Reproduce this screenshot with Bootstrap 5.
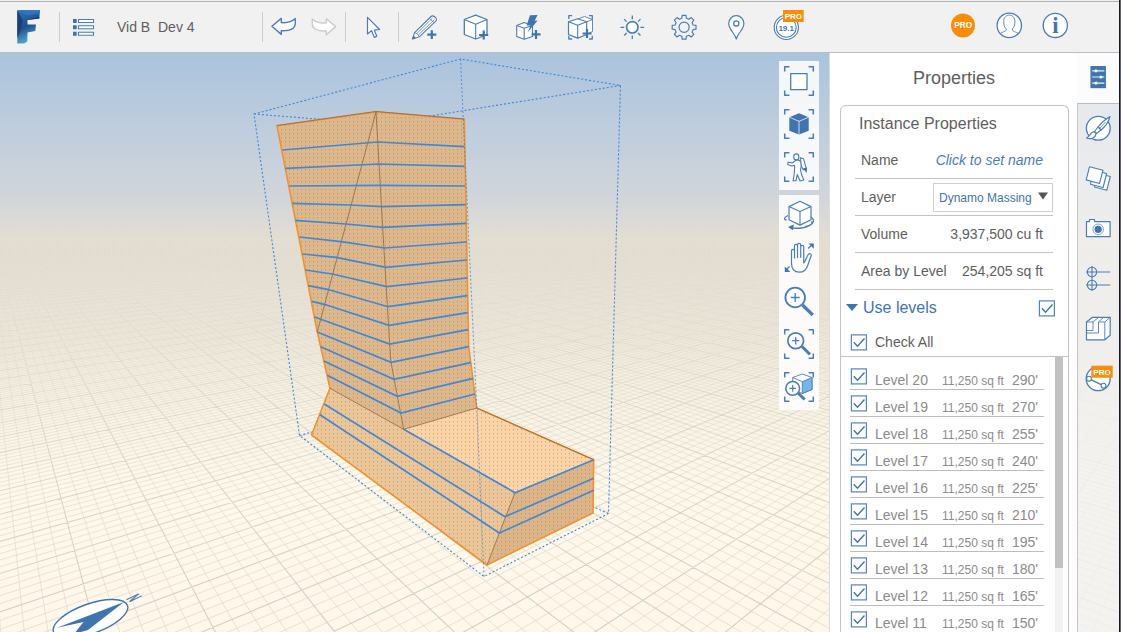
<!DOCTYPE html>
<html lang="en">
<head>
<meta charset="utf-8">
<title>Vid B Dev 4</title>
<link href="https://cdn.jsdelivr.net/npm/bootstrap@5.3.0/dist/css/bootstrap.min.css" rel="stylesheet">
<style>
:root{--ink:#3f74ae;--line:#c3c3c3;--orange:#f78c0d}
body{width:1121px;height:632px;overflow:hidden;font-family:"Liberation Sans",Arial,sans-serif;font-size:14px;line-height:1.2;color:#5e5e5e;background:#fff}
svg{display:block}
.app-shell{width:1119px;height:632px}
.screen-edge{width:2px;height:632px;background:linear-gradient(90deg,#151923 50%,#5a6478 50%)}
.top-bar{height:53px;padding-top:2px;background:#f1f1f1;border-bottom:1px solid #b9bcc0}
.top-bar::before{content:"";position:absolute;left:0;right:0;top:1px;height:1px;background:#b3b3b3}
.divider{width:1px;height:30px;background:#cbcbcb}
.ico{fill:none;stroke:#4a7db5;stroke-width:1.1;stroke-linejoin:round}
.ico .w{fill:#fff}
.ico .s{fill:var(--ink);stroke:none}
.ico text{stroke:none;font-weight:700}
.doc-title{width:154px;padding-left:9px;white-space:pre}
.stage{display:grid;height:579px}
.stage>*{grid-area:1/1;min-width:0}
.tool-set{background:rgba(255,255,255,.85);width:40px}
.view-tools{padding:8px 10px 0 0}
.side-panel{width:249px;background:#fff;border-left:1px solid #dcdcd8;border-right:1px solid #c6c6c6}
.tab-rail{width:41px;background:rgba(241,241,241,.8)}
.tab-on{background:#fcfcfd;border-bottom:1px solid #b9bcc0;margin-left:-1px;width:42px}
.panel-title{height:52px;font-size:18px;padding-left:1px}
.prop-card{margin:0 8px 0 10px;border:1.5px solid var(--line);border-bottom:0;border-radius:6px 6px 0 0;height:527px}
.card-head{height:36px;font-size:16px;padding-left:18px}
.prop-row{height:37px;margin:0 15px 0 14px;padding:0 10px 0 6px;border-bottom:1.5px solid var(--line)}
.layer-select{width:120px;height:29px;border:1.5px solid #cfcfcf;font-size:12px;color:var(--ink);margin-right:-10px;padding:2px 4px 0 5px}
.link-name{color:#4a7db5;font-style:italic}
.use-row{height:36px;font-size:16px;color:var(--ink);padding:0 13px 0 5px}
.all-row{height:31px;padding:2px 0 0 9px;border-bottom:1.5px solid var(--line)}
.tick{width:17px;height:17px;flex:none}
.level-list{padding:6px 0 0 9px;width:204px}
.level-row{width:194px;height:27px;border-bottom:1.5px solid #bcbcbc;color:#8b8b8b}
.level-row .tick{margin-top:5px}
.lv-name{width:75px;padding:9px 0 0 8px}
.lv-area{width:70px;font-size:12px;padding-top:11px}
.lv-elev{padding-top:9px}
.scroll-track{width:8px;background:#f2f2f2;height:276px}
.scroll-thumb{height:211px;background:#c1c1c1}
</style>
<script src="https://cdn.jsdelivr.net/npm/bootstrap@5.3.0/dist/js/bootstrap.bundle.min.js"></script>
</head>
<body>
<div class="d-flex">
<div class="app-shell d-flex flex-column">

<header class="top-bar position-relative d-flex align-items-center">
  <svg class="flex-shrink-0" width="59" height="50" viewBox="0 2 59 50">
    <defs><linearGradient id="lg" x1="0" y1="0" x2="0.3" y2="1"><stop offset="0" stop-color="#2f74bd"/><stop offset=".55" stop-color="#1f4f8d"/><stop offset="1" stop-color="#55a9d0"/></linearGradient></defs>
    <path d="M17.300 10.300H40l-.7 8L27.500 20v4.500h8.500l-.7 6.500-7.800 1.500-.2 9-3 2h-7z" fill="url(#lg)"/>
    <path d="M17.300 10.300 27 15.500 39.800 13V10.300z" fill="#2f74bd"/>
    <path d="M17.300 10.300 23 21 20 32 17.300 38z" fill="#1d3f75"/>
    <path d="M25 20.200 39.300 17 39.300 18.400 27.500 20z" fill="#16315d"/>
  </svg>
  <span class="divider"></span>
  <svg class="ico" width="48" height="50" viewBox="60 2 48 50"><g class="s"><path d="M73 19h3.700v4H73zM73 25.300h3.700v4H73zM73 31.700h3.700v4H73z"/></g><path class="w" d="M78.500 19.500h15v3h-15zM78.500 25.800h15v3h-15zM78.500 32.200h15v3h-15z"/></svg>
  <span class="doc-title">Vid B  Dev 4</span>
  <span class="divider"></span>
  <svg class="ico" width="41" height="50" viewBox="263 2 41 50"><path class="w" stroke-width="1.400" d="M271.900 26.300 281.300 18.400v4.200c5.500.6 10.500-.8 14-4v4.500c0 5.500-5 8.100-14 7.600v3.700z"/></svg>
  <svg class="ico" width="41" height="50" viewBox="304 2 41 50"><path class="w" style="stroke:#cbcbcb" stroke-width="1.400" d="M335.700 26.600 326.300 18.700v4.200c-5.500.6-10.500-.8-14-4v4.500c0 5.500 5 8.100 14 7.600v3.700z"/></svg>
  <span class="divider"></span>
  <svg class="ico" width="52" height="50" viewBox="346 2 52 50"><path class="w" stroke-width="1.200" d="M367.500 17.300V34l4-3.400 2.900 6.800 2.400-1.100-2.500-6.100 5.300-.7z"/></svg>
  <span class="divider"></span>
  <svg class="ico" width="51" height="50" viewBox="399 2 51 50"><path class="w" d="M412.500 39 414.600 32.600 431 16.500c2-2 7 2 5 4.300L419.300 36.800z"/><path stroke-width=".8" d="M414.600 32.600l2.300.9 1.400 1.500 1 1.800M416.900 33.500 432.500 18M418.300 35 434.500 19.500M429.500 18.300l4.800 4.700"/><path class="s" d="M412.300 39.300l1.200-3.700 2.400 2.500z"/><path class="s" d="M427.300 33.600h3.400v-3.300h2.200v3.300h3.400v2.200h-3.400v3.200h-2.200v-3.200h-3.400z"/></svg>
  <svg class="ico" width="52" height="50" viewBox="450 2 52 50"><path class="w" stroke-width="1.300" d="M475.700 15.200 487 19.500v15L475.700 39 464.300 34.500v-15z"/><path d="M464.300 19.500l11.400 4.800L487 19.500M475.700 24.300V39"/><path style="stroke:#3f74ae" stroke-width="2.200" d="M479.200 35h9M483.700 30.500v9"/></svg>
  <svg class="ico" width="52" height="50" viewBox="502 2 52 50"><path class="w" d="M524.200 22.500 532.500 25.600v10.800l-8.300 2.900-7.500-2.900V25.600z"/><path d="M516.700 25.600l7.500 2.700 8.300-2.700M524.200 28.300v11"/><path class="s" d="M530 15.200l7.600-.2-2.900 5.700 3-.2-10.200 11.900 3.100-7h-4z"/><path style="stroke:#3f74ae" stroke-width="2.200" d="M531.600 34.400h8.900M536 30v8.900"/></svg>
  <svg class="ico" width="52" height="50" viewBox="554 2 52 50"><path stroke-width="1.300" d="M568.800 19v-3.300h3.300M589 15.700h3.300V19M568.800 35.700v3.300h3.300M589 39h3.300v-3.300"/><path class="w" stroke-width=".9" d="M578 19l6.500-2.500 8 3v12l-6 3-9-4zM586.500 22l6-2.500"/><path class="w" stroke-width="1.200" d="M577.700 18.700l9 3v12.800l-9 3.600-9.200-3.600V21.700z"/><path d="M568.500 21.700l9.200 3.600 9-3.600M577.700 25.300v12.800"/><path style="stroke:#3f74ae" stroke-width="2.200" d="M582.500 33.500h9M587 29v9"/></svg>
  <svg class="ico" width="52" height="50" viewBox="606 2 52 50"><circle class="w" cx="632.300" cy="27.300" r="5.700" stroke-width="1.700"/><path stroke-width="1.300" d="M632.300 19.200v-3.700M632.300 35.400v3.700M624.200 27.300h-3.700M640.400 27.300h3.700M626.600 21.600l-2.500-2.500M638 33l2.500 2.500M626.600 33l-2.500 2.500M638 21.600l2.500-2.500"/></svg>
  <svg class="ico" width="52" height="50" viewBox="658 2 52 50"><g transform="translate(684.100 27.300)"><path stroke-width="1.200" d="M11.900-1.900V1.900L9 2.300 8 4.800 9.700 7.100 7.100 9.700 4.800 8 2.300 9 1.900 11.900H-1.900L-2.300 9-4.800 8-7.100 9.700-9.700 7.100-8 4.800-9 2.300-11.900 1.900V-1.900L-9-2.300-8-4.800-9.700-7.100-7.100-9.700-4.800-8-2.300-9-1.900-11.900H1.900L2.300-9 4.800-8 7.100-9.700 9.700-7.100 8-4.800 9-2.300z"/><circle r="5.100" stroke-width="1.200"/></g></svg>
  <svg class="ico" width="52" height="50" viewBox="710 2 52 50"><path class="w" stroke-width="1.200" d="M736.300 39c-1.500-6-7.600-9.500-7.600-15.500a7.600 7.800 0 0 1 15.200 0c0 6-6.100 9.500-7.600 15.500z"/><circle cx="736.300" cy="23.400" r="2.600" stroke-width="1.300"/></svg>
  <svg class="ico" width="52" height="50" viewBox="762 2 52 50"><circle class="w" cx="786.300" cy="27.400" r="12.100"/><circle cx="786.300" cy="27.400" r="9.900"/><text x="786.200" y="30.500" font-size="8" text-anchor="middle" fill="#3f74ae">19.1</text><rect x="783" y="10" width="20.700" height="12" fill="#f78c0d" stroke="none"/><text x="793.400" y="18.500" font-size="8" text-anchor="middle" fill="#fff">PRO</text></svg>
  <span class="flex-grow-1"></span>
  <svg class="ico" width="46" height="50" viewBox="940 2 46 50"><circle cx="963" cy="25.400" r="12" fill="#f78c0d" stroke="none"/><text x="963.200" y="28.300" font-size="8.300" text-anchor="middle" fill="#fff">PRO</text></svg>
  <svg class="ico" width="46" height="50" viewBox="986 2 46 50"><circle class="w" cx="1009.300" cy="25.400" r="12.200" stroke-width="1.300"/><path stroke-width=".9" d="M1000.500 33.500c1.500-2 6.200-1.500 5.800-4.500-2-2-2.600-4-2.600-7.500 0-8.500 11.200-8.500 11.200 0 0 3.500-.6 5.500-2.600 7.500-.4 3 4.300 2.500 5.800 4.500"/></svg>
  <svg class="ico" width="46" height="50" viewBox="1032 2 46 50"><circle class="w" cx="1055.300" cy="25.400" r="12.100" stroke-width="1.300"/><text x="1055.300" y="32.800" font-size="22.500" text-anchor="middle" fill="#3f74ae" style="font-family:'Liberation Serif',serif">i</text></svg>
  <span style="width:41px"></span>
</header>

<main class="stage">
  <svg id="scene" width="1119" height="579" viewBox="0 53 1119 579">
    <defs>
      <linearGradient id="sky" gradientUnits="userSpaceOnUse" x1="0" y1="53" x2="0" y2="632">
        <stop offset="0" stop-color="#aac3de"/><stop offset=".13" stop-color="#bfcddd"/><stop offset=".25" stop-color="#d1d5da"/><stop offset=".285" stop-color="#dad9d6"/><stop offset=".325" stop-color="#e6e0d4"/><stop offset=".42" stop-color="#ece6da"/><stop offset=".6" stop-color="#f8f2e4"/><stop offset=".75" stop-color="#fef8ea"/><stop offset="1" stop-color="#fff8ea"/>
      </linearGradient>
      <linearGradient id="fa" gradientUnits="userSpaceOnUse" x1="0" y1="220" x2="0" y2="632"><stop offset="0" stop-color="#c9c9bc" stop-opacity="0"/><stop offset=".12" stop-color="#c9c9bc" stop-opacity=".13"/><stop offset=".45" stop-color="#cfcdc0" stop-opacity=".65"/><stop offset="1" stop-color="#cfcdc0" stop-opacity=".95"/></linearGradient>
      <linearGradient id="fb" gradientUnits="userSpaceOnUse" x1="0" y1="225" x2="0" y2="632"><stop offset="0" stop-color="#d8d2c4" stop-opacity="0"/><stop offset=".12" stop-color="#d8d2c4" stop-opacity=".1"/><stop offset=".45" stop-color="#dcd6c8" stop-opacity=".48"/><stop offset="1" stop-color="#dfd9cb" stop-opacity=".75"/></linearGradient>
      <pattern id="dots" width="4" height="4" patternUnits="userSpaceOnUse"><rect x="1" y="1" width="1" height="1.300" fill="#b37a3c" fill-opacity=".55"/></pattern>
    </defs>
    <rect y="53" width="1119" height="579" fill="url(#sky)"/>
    <path id="minor" fill="none" stroke="url(#fb)" stroke-width="1"/>
    <path id="major" fill="none" stroke="url(#fa)" stroke-width="1.100"/>
    <path fill="none" stroke="#3d87d9" stroke-width="1.100" stroke-dasharray="2 2" d="M254 114 460.500 59 620.500 85.500 608.500 513.500 484 576.500 299.500 435.500zM254 114l126 10L620.500 85.500M299.500 435.500l14-4M592 506l16.500 7.500"/>
    <g>
      <path fill="#ddb88f" d="M277 125.800 376 111.800 389.700 344 403.700 429.300 330 388.300 317.300 332z"/>
      <path fill="#ddb78e" d="M376 111.800 464.300 119.300 468.700 346.700 476.700 408 403.700 429.300 389.700 344z"/>
      <path fill="#ecc69b" d="M330 388.300 403.700 429.300 515 492.700 487 565 311.500 435z"/>
      <path fill="#fbd5a9" d="M403.700 429.300 476.700 408 593.700 459.700 515 492.700z"/>
      <path fill="#dcb58b" d="M515 492.700 593.700 459.700 593 513 487 565z"/>
      <path fill="url(#dots)" stroke="#ee9330" stroke-width="1.600" stroke-linejoin="round" d="M277 125.800 376 111.800 464.300 119.300 468.700 346.700 476.700 408 593.700 459.700 593 513 487 565 311.500 435 330 388.300 317.300 332z"/>
    </g>
    <path fill="none" stroke="#8f6d45" stroke-width="1" stroke-opacity=".85" d="M277 125.500 376 111.500 464.300 119M476.700 408l117 51.700M376 111.800 317.300 332M376 111.800 384 250 389.700 344 391 362.300 403.700 429.300M330 388.300l73.700 41 73-21.300M515 492.700 487 565"/>
    <path fill="none" stroke="#3f88d8" stroke-width="1.700" d="M282.300 150 377.700 142 464.300 146.700M285.300 168.300 378.700 164 464.700 166.300M289.300 186 380 185.300 465 186M292.300 203.300 351 205 382 206.700 465.700 204.700M295.300 220.300 346 224 382.700 227.300 466.300 223.300M299.300 237 341 241.700 384.300 248 466.700 242M302.300 254 336 257.300 385.700 267.300 466.700 260M305.300 270 332.300 274 386.700 286.700 467.300 278M308.300 285.700 327.300 289.300 388 306.700 467.300 295.700M311.700 301.300 324.300 304.300 389 325.300 467.700 312.700M314.300 316.700 320 319 389.700 344 468.300 329.700M317.300 332 391 362.300 468.700 346.700M320.700 346.700 394 379.300 470.700 362.700M324 361 397.300 396.300 473.300 378.300M327.300 375.300 401 413 475 394M403.700 429.300 515 492.700 593.700 459.700M324.300 404 505 516.700 593.700 478.300M320 414.700 499.300 533 593.700 490.300"/>
    <path fill="none" stroke="#3d87d9" stroke-opacity=".75" stroke-width="1.100" stroke-dasharray="2 2" d="M460.500 59 469.300 250 476.700 407 484 576.500"/>
    <g fill="#3f74ae">
      <ellipse cx="90.500" cy="618.700" rx="39.300" ry="14.800" transform="rotate(-19.700 90.500 618.700)" fill="#fff" stroke="#3f74ae" stroke-width="1.400"/>
      <path d="M124 602 57 627.700 83.500 622 74 634 88 630z"/>
      <text transform="matrix(.65 .42 -1.650 .82 126 599)" font-size="10" stroke="#3f74ae" stroke-width=".45">N</text>
    </g>
  </svg>

  <div class="d-flex justify-content-end">
    <div class="view-tools d-flex flex-column gap-1">
      <div class="tool-set">
        <svg class="ico" width="40" height="43" viewBox="779 61 40 43"><path stroke-width="1.500" d="M784.700 71.500v-4.700h4.700M808.600 66.800h4.700v4.700M784.700 90.500v4.700h4.700M808.600 95.200h4.700v-4.700"/><rect class="w" x="790.700" y="73.700" width="16.300" height="16" stroke-width="1.300"/></svg>
        <svg class="ico" width="40" height="43" viewBox="779 104 40 43"><path stroke-width="1.500" d="M784.700 114.500v-4.700h4.700M808.600 109.800h4.700v4.700M784.700 133.500v4.700h4.700M808.600 138.200h4.700v-4.700"/><path class="s" d="M799 113.300l9.700 3.900v13.500l-9.700 3.800-9.700-3.800v-13.500z"/><path style="stroke:#dce8f4" stroke-width=".9" d="M789.300 117.200l9.700 4.100 9.700-4.100M799 121.300v13.200"/></svg>
        <svg class="ico" width="40" height="43" viewBox="779 147 40 43"><path stroke-width="1.500" d="M784.700 157.500v-4.700h4.700M808.600 152.800h4.700v4.700M784.700 176.500v4.700h4.700M808.600 181.200h4.700v-4.700"/><path class="w" d="M795.500 160.500c3-1.500 6 0 6 4l-1 5.500 1 4.500 2.300 5.500-3.600 1-3-6.500-1.200 6.300h-3l1.200-6.500.5-7-.3-2-2.400.8-4.300-1.600.3-2.300 4.500.7z"/><path class="w" d="M800.500 157.700l3 1 2.700 9.500-3 1.500-2-4z"/><path class="s" d="M803 168.500l4-1-.3 5.500z"/><ellipse class="w" cx="796.300" cy="156.900" rx="2.600" ry="3"/></svg>
      </div>
      <div class="tool-set" style="margin-top:1px">
        <svg class="ico" width="40" height="43" viewBox="779 195 40 43"><path d="M788 215.500c-4 2-4.500 4-1.500 4.700M811 217c5 3 2.500 9.500-10 11-4.500.5-8 .3-11-.7M811 221.500c3 2-1 4.500-6 5.200" stroke-width="1.300"/><path class="s" d="M788 227l5.800-2.600-.8 5.800z"/><path class="w" stroke-width="1.200" d="M800 201.300l11 5.300v13.200l-11 5.300-11-5.300v-13.200z"/><path d="M789 206.600l11 5 11-5M800 211.600v13.500"/></svg>
        <svg class="ico" width="40" height="43" viewBox="779 238 40 43"><path class="w" stroke-width="1.200" d="M791.500 263v-12c0-2.200 3-2.200 3 0v7V246c0-2.200 3-2.200 3 0v11.500V245c0-2.200 3.200-2.200 3.200 0v12.500V247c0-2.200 3-2.200 3 0v16c2-1.500 3-6.500 4.500-8.500 1-1.500 3.500-.8 3 1l-3.700 10.500c-1.500 4.500-4 6.200-8 6.200-5 0-8-3.200-8-9.200z"/><path stroke-width="1.300" d="M808 248.500l4.500-4M789.500 266.500l-4 4"/><path class="s" d="M808.500 243.500h5.300v5.300zM784.800 266.500v5.500h5.500z"/></svg>
        <svg class="ico" width="40" height="43" viewBox="779 281 40 43"><path stroke-width="3.200" d="M802.500 305l10.300 10"/><circle class="w" cx="795.200" cy="297.500" r="9.800" stroke-width="1.800"/><path stroke-width="1.300" d="M790.700 297.500h9M795.200 293v9"/></svg>
        <svg class="ico" width="40" height="43" viewBox="779 324 40 43"><path stroke-width="1.500" d="M784.700 334.500v-4.700h4.700M808.600 329.800h4.700v4.700M784.700 353.500v4.700h4.700M808.600 358.200h4.700v-4.700"/><path stroke-width="3" d="M802 346.500l8 8"/><circle class="w" cx="795.700" cy="340.700" r="7.900" stroke-width="1.700"/><path stroke-width="1.300" d="M792 340.700h7.400M795.700 337v7.400"/></svg>
        <svg class="ico" width="40" height="43" viewBox="779 367 40 43"><path stroke-width="1.500" d="M784.700 377.500v-4.700h4.700M808.600 372.800h4.700v4.700M784.700 396.500v4.700h4.700M808.600 401.200h4.700v-4.700"/><path class="w" stroke-width=".9" d="M802.300 374l9.700 3.500v12l-9.700 4-9.600-4v-12z"/><path fill="#76b5ea" stroke-width=".9" d="M802.300 381.700l9.700-4.200v12l-9.700 4z"/><path d="M792.700 377.500l9.600 4.200" stroke-width=".9"/><path stroke-width="3" d="M798 393l6.700 6.500"/><circle class="w" cx="792.700" cy="388.400" r="6.900" stroke-width="1.600"/><path stroke-width="1.200" d="M789.400 388.400h6.600M792.700 385.100v6.600"/></svg>
      </div>
    </div>

    <section class="side-panel">
      <h1 class="panel-title d-flex align-items-center justify-content-center m-0 fw-normal">Properties</h1>
      <div class="prop-card">
        <h2 class="card-head d-flex align-items-center m-0 fw-normal">Instance Properties</h2>
        <div class="prop-row d-flex align-items-center justify-content-between"><span>Name</span><span class="link-name">Click to set name</span></div>
        <div class="prop-row d-flex align-items-center justify-content-between"><span>Layer</span>
          <span class="layer-select d-flex align-items-center justify-content-between">Dynamo Massing<svg width="10" height="8" viewBox="0 0 10 8" class="mb-1"><path d="M0 .5h10L5 7.500z" fill="#555"/></svg></span></div>
        <div class="prop-row d-flex align-items-center justify-content-between"><span>Volume</span><span>3,937,500 cu ft</span></div>
        <div class="prop-row d-flex align-items-center justify-content-between"><span>Area by Level</span><span>254,205 sq ft</span></div>
        <div class="use-row d-flex align-items-center"><svg width="12" height="7" viewBox="0 0 12 7" style="margin:0 5px 2px 0"><path d="M0 0h12L6 7z" fill="#3f74ae"/></svg><span class="flex-grow-1">Use levels</span><svg class="tick"><use href="#tk"/></svg></div>
        <div class="all-row d-flex align-items-center"><svg class="tick"><use href="#tk"/></svg><span class="ms-2">Check All</span></div>
        <div class="d-flex"><div class="level-list" id="levels"></div><span style="width:10px"></span><div class="scroll-track"><div class="scroll-thumb"></div></div></div>
      </div>
    </section>

    <nav class="tab-rail">
      <svg class="ico tab-on" width="42" height="51" viewBox="1077 53 42 51"><rect class="s" x="1090.300" y="66.300" width="15.800" height="22.600"/><g style="stroke:#e7eef6"><path d="M1092 71.200h12.500M1092 77.500h12.500M1092 83.700h12.500"/></g><g fill="#fff" stroke="none"><circle cx="1096" cy="71.200" r="1.600"/><circle cx="1101" cy="77.500" r="1.600"/><circle cx="1096" cy="83.700" r="1.600"/></g></svg>
      <svg class="ico" width="41" height="49" viewBox="1078 104 41 49"><circle class="w" cx="1098.300" cy="128.300" r="11.900" stroke-width="1.300"/><path class="w" d="M1110 116.500c-5 3-9 6.500-12 10.500l3 3c4.500-3.500 7.500-8 9-13.500z"/><path class="w" d="M1098 127l-3.500 4.500 2 2 4.500-3.500z"/><path class="w" d="M1094 131.500c-4 1-3.500 4.500-7.500 6.500 4 1.500 9 .5 9.500-4.500z"/><path stroke-width=".8" d="M1099.500 128.500l6-6.500"/></svg>
      <svg class="ico" width="41" height="50" viewBox="1078 153 41 50"><path class="w" d="M1098 173.500l12.300 3-3.500 13.800-12.300-3.300z"/><path class="w" d="M1094 170.500l12.600 3-3.500 14-12.600-3.300z"/><path class="w" d="M1089.500 166.800l13.500 3.400-3.500 13.300-13.300-3.600z"/></svg>
      <svg class="ico" width="41" height="50" viewBox="1078 203 41 50"><path class="w" stroke-width="1.200" d="M1086.500 221.700h3v-2.200h5v2.200h15.600v15h-23.600z"/><circle cx="1098.200" cy="229.300" r="5.300" stroke-width=".7"/><circle class="s" cx="1098.200" cy="229.300" r="3.600"/></svg>
      <svg class="ico" width="41" height="50" viewBox="1078 253 41 50"><circle cx="1092" cy="272" r="4.700"/><circle cx="1092" cy="285" r="4.700"/><path d="M1086 272h24.300M1086 285h24.300M1092 266v25"/></svg>
      <svg class="ico" width="41" height="50" viewBox="1078 303 41 50"><path class="w" stroke-width="1.200" d="M1086.500 322l6-4.700h17.700v18l-5.400 4.500h-18.300z"/><path stroke-width=".9" d="M1086.500 322h6.500l5.500-4.700M1093 322v8.500h-6.500M1098.500 322h6.300v17.800M1104.800 322l5.400-4.700M1098.500 322l5.200-4.700M1098.500 322v11h-12"/></svg>
      <svg class="ico" width="41" height="50" viewBox="1078 353 41 50"><circle class="w" cx="1098.200" cy="378.700" r="12" stroke-width="1.300"/><path stroke-width="1.500" d="M1091 379.700l10 5"/><circle class="w" cx="1089" cy="378.700" r="2.400"/><circle class="w" cx="1103.500" cy="385.700" r="2.400"/><rect x="1091.300" y="365.700" width="21.400" height="12" fill="#f78c0d" stroke="none"/><text x="1102" y="374.500" font-size="8" text-anchor="middle" fill="#fff">PRO</text></svg>
    </nav>
  </div>
</main>
</div>
<div class="screen-edge"></div>
</div>

<svg width="0" height="0" class="position-absolute"><symbol id="tk" viewBox="0 0 17 17"><rect x="1.400" y=".9" width="15" height="15" fill="#fff" stroke="#5286bc" stroke-width="1.200"/><path d="M3.800 8.200l3.700 4 7-7.700" fill="none" stroke="#3f74ae" stroke-width="1.400"/></symbol></svg>

<script>
// Ground grid: two families of parallels meeting on the horizon
const H = 180, REF = 500, BOTTOM = 640;
function family(vx, base, step, from, to, div) {
  let d = "";
  for (let k = from * div; k <= to * div; k++) {
    if (div > 1 && k % div === 0) continue;
    const x = base + step * k / div;
    const t = (BOTTOM - H) / (REF - H), s = (222 - H) / (REF - H);
    d += `M${(vx + (x - vx) * s).toFixed(1)} 222L${(vx + (x - vx) * t).toFixed(1)} ${BOTTOM}`;
  }
  return d;
}
const grid = div => family(-22, 61.5, 84.55, -18, 100, div) + family(1285, 240, 92.7, -100, 28, div);
document.getElementById("major").setAttribute("d", grid(1));
document.getElementById("minor").setAttribute("d", grid(5));

// Level rows
const heights = [290, 270, 255, 240, 225, 210, 195, 180, 165, 150];
document.getElementById("levels").innerHTML = heights.map((h, i) =>
  `<div class="level-row d-flex align-items-start"><svg class="tick"><use href="#tk"/></svg><span class="lv-name">Level ${20 - i}</span><span class="lv-area">11,250 sq ft</span><span class="lv-elev">${h}'</span></div>`).join("");
</script>
</body>
</html>
